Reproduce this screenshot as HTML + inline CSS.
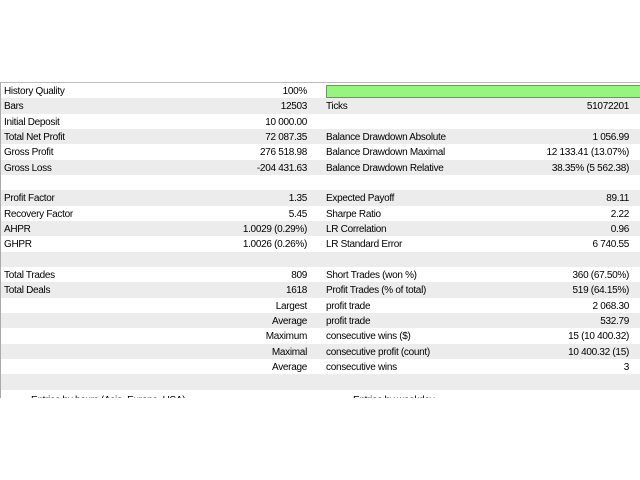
<!DOCTYPE html><html><head><style>
body{margin:0;width:640px;height:480px;background:#fff;position:relative;overflow:hidden;font-family:"Liberation Sans",sans-serif;font-size:10px;color:#000}
.frame{position:absolute;left:0;top:82px;width:640px;height:315px;border-top:1px solid #bbb;border-left:1px solid #aaa;overflow:hidden}
.r{position:absolute;left:0;width:640px;height:15.33px;line-height:18px}
.g{background:#ececec}
.r span{position:absolute;white-space:nowrap;letter-spacing:-0.3px}
.a{left:3px}.b{right:334px}.c{left:325px}.d{right:12px}
.bar{position:absolute;left:325px;top:2px;width:320px;height:11px;background:#96f57f;border:1px solid #6a9a5a}
</style></head><body><div class="frame">
<div class="r" style="top:0"><span class="a">History Quality</span><span class="b">100%</span><div class="bar"></div></div>
<div class="r g" style="top:15.33px"><span class="a">Bars</span><span class="b">12503</span><span class="c">Ticks</span><span class="d">51072201</span></div>
<div class="r" style="top:30.67px"><span class="a">Initial Deposit</span><span class="b">10 000.00</span></div>
<div class="r g" style="top:46px"><span class="a">Total Net Profit</span><span class="b">72 087.35</span><span class="c">Balance Drawdown Absolute</span><span class="d">1 056.99</span></div>
<div class="r" style="top:61.33px"><span class="a">Gross Profit</span><span class="b">276 518.98</span><span class="c">Balance Drawdown Maximal</span><span class="d">12 133.41 (13.07%)</span></div>
<div class="r g" style="top:76.67px"><span class="a">Gross Loss</span><span class="b">-204 431.63</span><span class="c">Balance Drawdown Relative</span><span class="d">38.35% (5 562.38)</span></div>
<div class="r" style="top:92px"></div>
<div class="r g" style="top:107.33px"><span class="a">Profit Factor</span><span class="b">1.35</span><span class="c">Expected Payoff</span><span class="d">89.11</span></div>
<div class="r" style="top:122.67px"><span class="a">Recovery Factor</span><span class="b">5.45</span><span class="c">Sharpe Ratio</span><span class="d">2.22</span></div>
<div class="r g" style="top:138px"><span class="a">AHPR</span><span class="b">1.0029 (0.29%)</span><span class="c">LR Correlation</span><span class="d">0.96</span></div>
<div class="r" style="top:153.33px"><span class="a">GHPR</span><span class="b">1.0026 (0.26%)</span><span class="c">LR Standard Error</span><span class="d">6 740.55</span></div>
<div class="r g" style="top:168.67px"></div>
<div class="r" style="top:184px"><span class="a">Total Trades</span><span class="b">809</span><span class="c">Short Trades (won %)</span><span class="d">360 (67.50%)</span></div>
<div class="r g" style="top:199.33px"><span class="a">Total Deals</span><span class="b">1618</span><span class="c">Profit Trades (% of total)</span><span class="d">519 (64.15%)</span></div>
<div class="r" style="top:214.67px"><span class="b">Largest</span><span class="c">profit trade</span><span class="d">2 068.30</span></div>
<div class="r g" style="top:230px"><span class="b">Average</span><span class="c">profit trade</span><span class="d">532.79</span></div>
<div class="r" style="top:245.33px"><span class="b">Maximum</span><span class="c">consecutive wins ($)</span><span class="d">15 (10 400.32)</span></div>
<div class="r g" style="top:260.67px"><span class="b">Maximal</span><span class="c">consecutive profit (count)</span><span class="d">10 400.32 (15)</span></div>
<div class="r" style="top:276px"><span class="b">Average</span><span class="c">consecutive wins</span><span class="d">3</span></div>
<div class="r g" style="top:291.33px"></div>
<div class="r" style="top:309px"><span style="left:30px">Entries by hours (Asia, Europe, USA)</span><span style="left:352px">Entries by weekday</span></div>
</div></body></html>
